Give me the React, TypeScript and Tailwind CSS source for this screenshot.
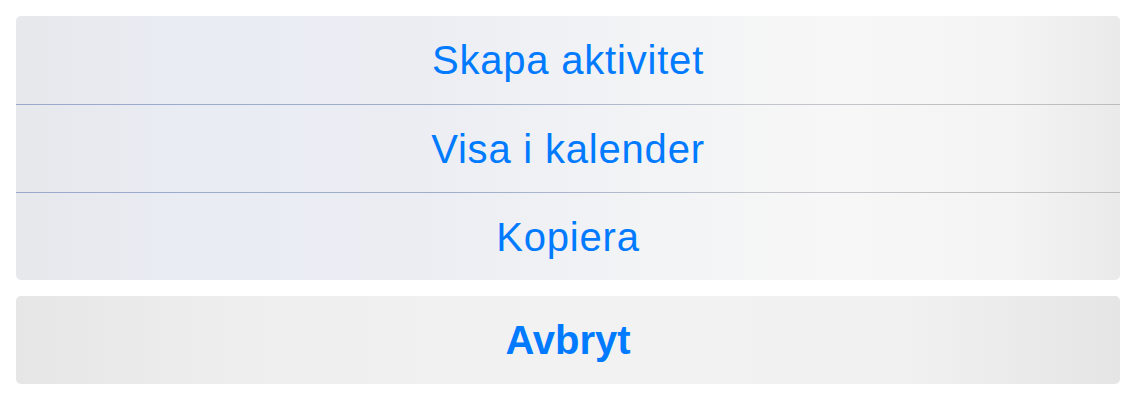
import React from "react";

const rowBg =
  "bg-[linear-gradient(90deg,#e7e8ec_0%,#e9ecf3_15%,#ebedf3_35%,#f2f3f5_55%,#f7f7f7_75%,#f4f4f4_90%,#eaeaea_100%)]";

export default function App() {
  const items = ["Skapa aktivitet", "Visa i kalender", "Kopiera"];
  return (
    <div
      className="w-[1136px] h-[400px] bg-white px-4 pt-4 flex flex-col gap-4"
      style={{ fontFamily: '"Liberation Sans", Arial, sans-serif' }}
    >
      <div className={`rounded-[5px] overflow-hidden flex flex-col ${rowBg}`}>
        {items.map((t, i) => (
          <React.Fragment key={t}>
            {i > 0 && (
              <div className="h-px bg-[linear-gradient(90deg,#9aa9cc_0%,#a0aecd_40%,#c4c6cc_70%,#bcbcbc_100%)]" />
            )}
            <div
              className={`${i === 0 ? "h-[88px]" : "h-[87px]"} flex items-center justify-center text-[40px] text-[#007aff] tracking-[0.8px]`}
            >
              {t}
            </div>
          </React.Fragment>
        ))}
      </div>
      <div className="h-[88px] rounded-[5px] flex items-center justify-center bg-[linear-gradient(90deg,#e6e6e6_0%,#eeeeee_20%,#f2f2f2_50%,#f1f1f1_80%,#e5e5e5_100%)] text-[40px] font-bold text-[#007aff]">
        Avbryt
      </div>
    </div>
  );
}
